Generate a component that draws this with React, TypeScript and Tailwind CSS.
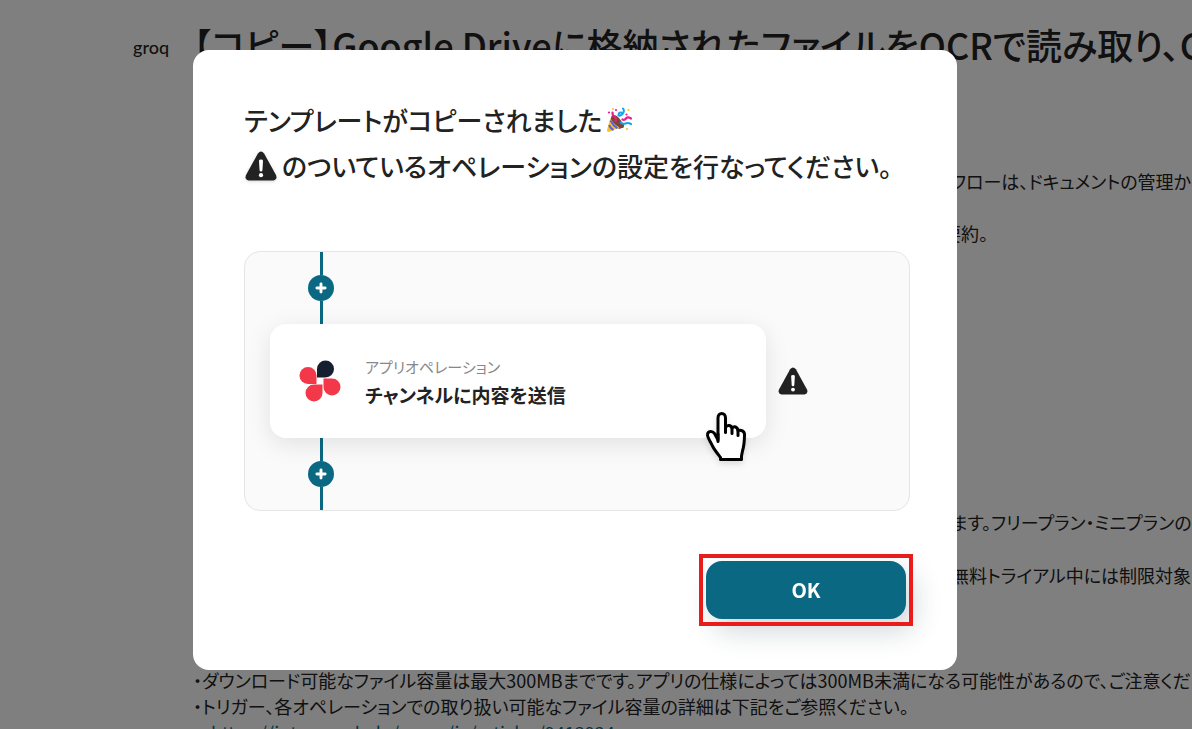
import { Plus } from "lucide-react";

function WarningIcon({ className }: { className?: string }) {
  return (
    <svg viewBox="0 0 32 30" className={className} role="img" aria-label="警告">
      <path
        d="M12.9 2.4Q16-1.4 19.1 2.4L31 24Q32.6 28.4 28.4 29.5H3.6Q-.6 28.4 1 24Z"
        fill="#222222"
      />
      <path d="M14 9.6Q14 8.6 16 8.6T18 9.6L17.4 19.6Q17.2 20.6 16 20.6T14.6 19.6Z" fill="#fff" />
      <circle cx="16" cy="24.2" r="2.1" fill="#fff" />
    </svg>
  );
}

function PartyIcon({ className }: { className?: string }) {
  return (
    <svg viewBox="0 0 26 26" className={className} role="img" aria-label="クラッカー">
      <path d="M5.5 9Q9 6.500 13 11T17.500 20.500L13 22 4.500 13Z" fill="#7d4533" />
      <circle cx="15.500" cy="18.500" r="2.500" fill="#7d4533" />
      <path d="M4.500 11Q6 16 13.500 20.500L3 25Q.6 25.400 1 23Z" fill="#fcc21b" />
      <path d="M4.400 13.500Q7 18.500 11.500 21.300M3 18Q4.500 21.500 7.500 23" stroke="#5b62e0" strokeWidth="2" fill="none" />
      <path d="M6.500 5.500Q6.500 9 8.500 9.500T9.500 14M16.500 12.500Q18.500 13.500 20 11.500T25 11.500" stroke="#ec1c8e" strokeWidth="2.200" fill="none" strokeLinecap="round" />
      <path d="M17 1.500Q19 4.500 16.500 7T12.500 8.500Q12.500 5 15.500 5.500M14.500 15.500Q17 17.500 19.500 16.500T25 17" stroke="#12a5e8" strokeWidth="2" fill="none" strokeLinecap="round" />
      <g fill="#ec1c8e">
        <circle cx="3" cy="5.500" r="1.100" />
        <circle cx="10" cy="3" r="1.100" />
        <circle cx="20.500" cy="7.500" r="1.100" />
      </g>
      <g fill="#fcc21b">
        <circle cx="7" cy="2" r="1" />
        <circle cx="22.500" cy="3" r="1.100" />
        <circle cx="21" cy="22" r="1.100" />
      </g>
    </svg>
  );
}

function AppLogo({ className }: { className?: string }) {
  return (
    <svg viewBox="0 0 42 42" className={className} aria-hidden="true">
      <path d="M18 17.500V9A8.500 8.500 0 1 1 26.500 17.500Z" fill="#142030" />
      <path d="M17.500 24H9A8.500 8.500 0 1 1 17.500 15.500Z" fill="#f23849" />
      <path d="M24.500 18.500H33A8.500 8.500 0 1 1 24.500 27Z" fill="#f23849" />
      <path d="M23.500 24.500V33A8.500 8.500 0 1 1 15 24.500Z" fill="#f23849" />
    </svg>
  );
}

function HandCursor({ className }: { className?: string }) {
  return (
    <svg viewBox="0 0 40 50" className={className} aria-hidden="true">
      <path
        d="M14.500 47.500V45.500C11 41 8.500 38 6.500 34C4.500 29.500 1 25 1.500 22.500C2 19 6 18.500 8.500 21.500L12 28V6C12 0 19.500 0 19.500 6V15.500C21 12.500 25 13 26 16C28 13.500 31.500 15 32 18.500C35 17.500 38.500 19 38.500 22.500C38.500 29 38 34 36.500 39L35.500 44V47.500Z"
        fill="#fff"
        stroke="#000"
        strokeWidth="3"
        strokeLinejoin="round"
      />
      <path d="M12 22V29.500M19.500 14V20.500M26 16V21.500M32 18V23.500" stroke="#000" strokeWidth="3" strokeLinecap="round" />
    </svg>
  );
}

function Connector() {
  return (
    <div className="ml-[63px] flex h-[72px] w-[26px] flex-col items-center">
      <span className="w-[3px] flex-1 bg-[#0b6883]" />
      <span className="flex size-[26px] items-center justify-center rounded-full bg-[#0b6883] text-white">
        <Plus size={14} strokeWidth={5} />
      </span>
      <span className="w-[3px] flex-1 bg-[#0b6883]" />
    </div>
  );
}

function TemplatePage() {
  return (
    <main className="flex h-screen gap-[26px] overflow-hidden whitespace-nowrap bg-white pl-[133px] pt-[14px] text-[#222222]">
      <span className="w-[34px] shrink-0 pt-[17px] font-[family-name:Lato] text-[18px] font-medium leading-8">groq</span>
      <div className="min-w-0 flex-1">
        <h1 className="text-[36px] font-medium leading-[60px]">
          【コピー】Google Driveに格納されたファイルをOCRで読み取り、Groqで要約する
        </h1>
        <div className="pt-[94px] text-[18px] leading-[26px]">
          <p className="pl-[758px]">フローは、ドキュメントの管理か</p>
          <p className="pl-[750px] pt-[26px]">要約。</p>
          <div className="space-y-[27px] pl-[758px] pt-[263px]">
            <p>ます。フリープラン・ミニプランの</p>
            <p>無料トライアル中には制限対象</p>
          </div>
          <div className="pt-[79px]">
            <p>・ダウンロード可能なファイル容量は最大300MBまでです。アプリの仕様によっては300MB未満になる可能性があるので、ご注意くだ</p>
            <p>・トリガー、各オペレーションでの取り扱い可能なファイル容量の詳細は下記をご参照ください。</p>
            <p className="pl-[18px]">
              <a href="#articles" className="text-[#0b6883]">
                https://intercom.help/yoom/ja/articles/9413924
              </a>
            </p>
          </div>
        </div>
      </div>
    </main>
  );
}

function CopiedDialog() {
  return (
    <div className="fixed inset-0 flex items-center justify-center bg-black/50 pb-[10px] pr-[42px]">
      <div
        role="dialog"
        aria-modal="true"
        aria-labelledby="copied-title"
        className="w-full max-w-[764px] rounded-2xl bg-white pb-[51px] pl-[51px] pr-[47px] pt-[47px] text-[#222222]"
      >
        <h2 id="copied-title" className="text-[26px] font-medium leading-[46px]">
          <span className="flex items-center gap-1">
            テンプレートがコピーされました
            <PartyIcon className="size-[26px]" />
          </span>
          <span className="flex items-center gap-1">
            <WarningIcon className="h-[30px] w-[34px] drop-shadow" />
            のついているオペレーションの設定を行なってください。
          </span>
        </h2>

        <div className="mt-[62px] rounded-2xl border border-[#e5e5e5] bg-[#fafafa]">
          <Connector />
          <div className="flex items-center gap-3 pl-[25px]">
            <div className="relative flex h-[114px] w-full max-w-[496px] items-center gap-6 rounded-2xl bg-white pl-[29px] shadow-[0_6px_24px_rgba(0,0,0,0.1)]">
              <AppLogo className="size-[42px]" />
              <div>
                <p className="text-[15px] leading-7 text-[#888888]">アプリオペレーション</p>
                <p className="text-[19px] font-bold leading-7">チャンネルに内容を送信</p>
              </div>
              <HandCursor className="absolute -bottom-6 right-5 h-[50px] w-10 drop-shadow-md" />
            </div>
            <WarningIcon className="h-7 w-[30px]" />
          </div>
          <Connector />
        </div>

        <div className="mt-[50px] flex justify-end pr-1">
          <div className="relative">
            <button
              type="button"
              className="h-[58px] w-[200px] rounded-2xl bg-[#0b6883] text-[20px] font-bold text-white shadow-[8px_12px_28px_rgba(30,50,70,0.2)]"
            >
              OK
            </button>
            <span className="pointer-events-none absolute -inset-[7px] border-4 border-[#e91c1c]" />
          </div>
        </div>
      </div>
    </div>
  );
}

export default function App() {
  return (
    <div className="font-['Noto_Sans_CJK_JP',sans-serif] [font-feature-settings:'palt']">
      <TemplatePage />
      <CopiedDialog />
    </div>
  );
}
